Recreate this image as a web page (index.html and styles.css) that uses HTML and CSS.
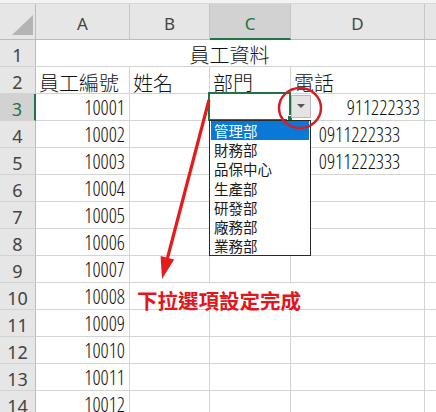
FILE: index.html
```html
<!DOCTYPE html>
<html lang="zh-Hant">
<head>
<meta charset="utf-8">
<title>員工資料</title>
<link rel="stylesheet" href="styles.css">
</head>
<body>
<div class="topbar"></div>
<div class="sheet">
  <div class="corner"><svg width="36" height="36" viewBox="0 0 36 36"><polygon points="33,11 33,31 12,31" fill="#b4b4b4"/></svg></div>
  <div class="ch">A</div>
  <div class="ch">B</div>
  <div class="ch sel">C</div>
  <div class="ch">D</div>
  <div class="ch last"></div>

  <div class="rh">1</div>
  <div class="cell title span4">員工資料</div>
  <div class="cell e"></div>

  <div class="rh">2</div>
  <div class="cell txt">員工編號</div>
  <div class="cell txt">姓名</div>
  <div class="cell txt">部門</div>
  <div class="cell txt">電話</div>
  <div class="cell e"></div>

  <div class="rh sel">3</div>
  <div class="cell num">10001</div>
  <div class="cell"></div>
  <div class="cell active">
    <span class="fill-handle"></span>
    <span class="dd-btn"><svg width="8" height="5" viewBox="0 0 8 5"><polygon points="0,0 8,0 4,4" fill="#555"/></svg></span>
    <ul class="dd-list">
      <li class="hi">管理部</li>
      <li>財務部</li>
      <li>品保中心</li>
      <li>生產部</li>
      <li>研發部</li>
      <li>廠務部</li>
      <li>業務部</li>
    </ul>
  </div>
  <div class="cell num">911222333</div>
  <div class="cell e"></div>

  <div class="rh">4</div>
  <div class="cell num">10002</div>
  <div class="cell"></div>
  <div class="cell"></div>
  <div class="cell num center">0911222333</div>
  <div class="cell e"></div>

  <div class="rh">5</div>
  <div class="cell num">10003</div>
  <div class="cell"></div>
  <div class="cell"></div>
  <div class="cell num center">0911222333</div>
  <div class="cell e"></div>

  <div class="rh">6</div>
  <div class="cell num">10004</div>
  <div class="cell"></div><div class="cell"></div><div class="cell"></div><div class="cell e"></div>

  <div class="rh">7</div>
  <div class="cell num">10005</div>
  <div class="cell"></div><div class="cell"></div><div class="cell"></div><div class="cell e"></div>

  <div class="rh">8</div>
  <div class="cell num">10006</div>
  <div class="cell"></div><div class="cell"></div><div class="cell"></div><div class="cell e"></div>

  <div class="rh">9</div>
  <div class="cell num">10007</div>
  <div class="cell"></div><div class="cell"></div><div class="cell"></div><div class="cell e"></div>

  <div class="rh">10</div>
  <div class="cell num">10008</div>
  <div class="cell note span3">下拉選項設定完成</div>
  <div class="cell e"></div>

  <div class="rh">11</div>
  <div class="cell num">10009</div>
  <div class="cell"></div><div class="cell"></div><div class="cell"></div><div class="cell e"></div>

  <div class="rh">12</div>
  <div class="cell num">10010</div>
  <div class="cell"></div><div class="cell"></div><div class="cell"></div><div class="cell e"></div>

  <div class="rh">13</div>
  <div class="cell num">10011</div>
  <div class="cell"></div><div class="cell"></div><div class="cell"></div><div class="cell e"></div>

  <div class="rh">14</div>
  <div class="cell num">10012</div>
  <div class="cell"></div><div class="cell"></div><div class="cell"></div><div class="cell e"></div>

  <svg class="annot" width="436" height="420" viewBox="0 0 436 420">
    <ellipse cx="300" cy="104" rx="21" ry="20" fill="none" stroke="#d21f28" stroke-width="2.5"/>
    <line x1="209" y1="96" x2="167.5" y2="254" stroke="#e41b1b" stroke-width="3.2"/>
    <polygon points="162,275 174.2,255.5 160.6,251.9" fill="#e41b1b"/>
  </svg>
</div>
</body>
</html>
```
FILE: styles.css
```css
* {
  box-sizing: border-box;
  margin: 0;
  padding: 0;
}

html, body {
  width: 436px;
  height: 412px;
  overflow: hidden;
  background: #ffffff;
}

body {
  font-family: "Noto Sans CJK TC", "Noto Sans", sans-serif;
  color: #111;
}

.topbar {
  height: 4px;
  background: #f3f3f3;
  border-bottom: 1px solid #d6d6d6;
}

.sheet {
  position: relative;
  display: grid;
  grid-template-columns: 36px 94px 80px 81px 134px 11px;
  grid-template-rows: 36px repeat(14, 27px);
}

.corner {
  background: #e6e6e6;
  border-right: 1px solid #bcbcbc;
  border-bottom: 1px solid #bcbcbc;
}

.corner svg {
  display: block;
}

.ch {
  background: #e6e6e6;
  border-right: 1px solid #c6c6c6;
  border-bottom: 1px solid #bcbcbc;
  display: flex;
  align-items: center;
  justify-content: center;
  padding-top: 4px;
  font-family: "Noto Sans", "Open Sans", sans-serif;
  font-size: 17px;
  color: #444;
}

.ch.last {
  border-right: none;
}

.ch.sel {
  background: #d2d2d2;
  border-bottom: 2px solid #217346;
  color: #217346;
}

.rh {
  background: #e6e6e6;
  border-right: 1px solid #bcbcbc;
  border-bottom: 1px solid #d2d2d2;
  display: flex;
  align-items: center;
  justify-content: center;
  padding-top: 3px;
  font-family: "Noto Sans", "Open Sans", sans-serif;
  font-size: 18px;
  color: #444;
}

.rh.sel {
  background: #d2d2d2;
  border-right: 2px solid #217346;
  color: #217346;
}

.cell {
  position: relative;
  border-right: 1px solid #d4d4d4;
  border-bottom: 1px solid #d4d4d4;
  display: flex;
  align-items: flex-end;
  padding: 0 4px;
  white-space: nowrap;
  line-height: 20px;
}

.cell.e {
  border-right: none;
}

.span4 {
  grid-column: span 4;
}

.span3 {
  grid-column: span 3;
}

.txt,
.title {
  font-size: 20px;
  font-weight: 300;
  padding-left: 3px;
}

.title {
  justify-content: center;
  padding-bottom: 1px;
}

.num {
  justify-content: flex-end;
  font-family: "Open Sans", "Noto Sans", sans-serif;
  font-stretch: 80%;
  font-weight: 300;
  font-size: 20px;
  padding-bottom: 2px;
  padding-right: 4px;
}

.num.center {
  justify-content: center;
  padding-right: 0;
}

.note {
  font-size: 20.5px;
  font-weight: 700;
  color: #e3151d;
  line-height: 18px;
  padding-left: 7px;
  padding-bottom: 0;
}

/* active cell C3 with validation dropdown */
.active::after {
  content: "";
  position: absolute;
  left: -2px;
  top: -2px;
  right: -1px;
  bottom: -1px;
  border: 2px solid #217346;
  pointer-events: none;
}

.fill-handle {
  position: absolute;
  left: 77px;
  top: 21px;
  width: 6px;
  height: 6px;
  background: #217346;
  border: 1px solid #ffffff;
  z-index: 2;
}

.dd-btn {
  position: absolute;
  left: 81px;
  top: 1px;
  width: 20px;
  height: 23px;
  background: #e4e4e4;
  border: 1px solid #b9b9b9;
  display: flex;
  align-items: center;
  justify-content: center;
  z-index: 3;
}

.dd-btn svg {
  display: block;
}

.dd-list {
  position: absolute;
  left: -1px;
  top: 26px;
  width: 102px;
  height: 136px;
  background: #ffffff;
  border: 1px solid #2a2a2a;
  padding: 0 1px;
  list-style: none;
  z-index: 4;
}

.dd-list li {
  height: 19.2px;
  line-height: 19.2px;
  padding-left: 3px;
  font-size: 14.5px;
  color: #1a1a1a;
}

.dd-list li.hi {
  background: #0a78d7;
  color: #ffffff;
}

.annot {
  position: absolute;
  left: 0;
  top: 0;
  pointer-events: none;
  z-index: 5;
}
```
